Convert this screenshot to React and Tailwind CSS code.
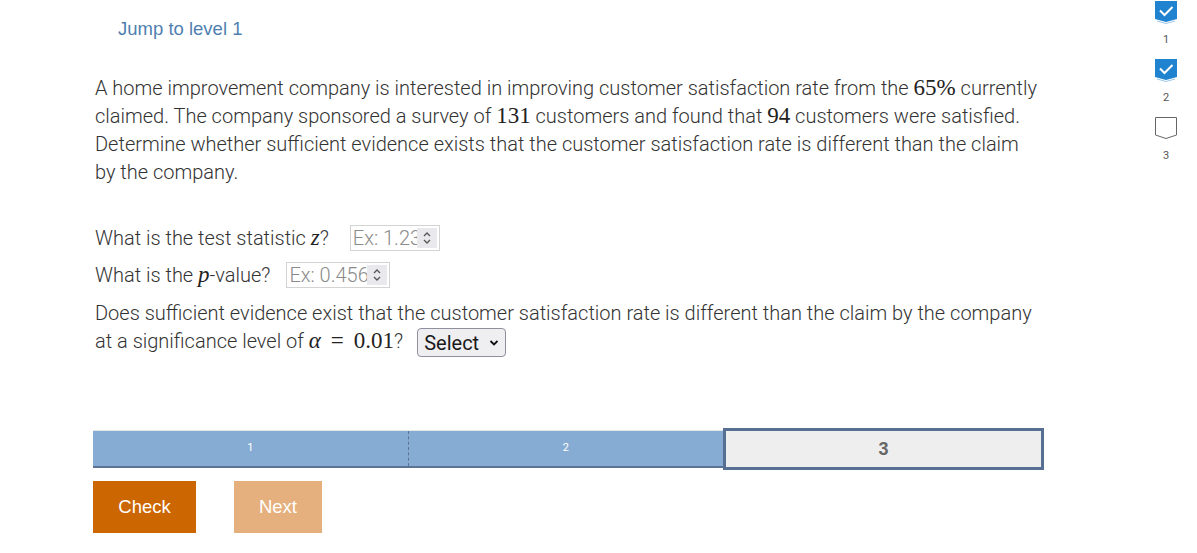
import React from 'react';

const M = ({ children, italic }) => (
  <span className={`font-['Liberation_Serif','DejaVu_Serif',serif] text-[23px] leading-none text-[#222] ${italic ? 'italic' : ''}`}>
    {children}
  </span>
);

const Spinner = () => (
  <span className="flex h-full w-[20px] items-center justify-center bg-[#e9e9ed]">
    <svg width="10" height="16" viewBox="0 0 10 16" fill="none" stroke="#555" strokeWidth="1.3">
      <path d="M2 6 L5 3 L8 6" />
      <path d="M2 10 L5 13 L8 10" />
    </svg>
  </span>
);

const NumInput = ({ placeholder, width, gap }) => (
  <span className={`${gap} inline-flex h-[26px] ${width} items-center overflow-hidden border border-[#d3d3d3] bg-white align-middle`}>
    <span className="flex-1 overflow-hidden whitespace-nowrap pl-[2px] text-[#8a8a8a]">{placeholder}</span>
    <span className="mr-[2px] h-[20px]"><Spinner /></span>
  </span>
);

const Badge = ({ done, label }) => (
  <div className="flex h-[58px] flex-col items-center">
    <svg width="24" height="24" viewBox="0 0 24 24">
      {done ? (
        <>
          <path d="M1 1 H23 V19 L12 22 L1 19 Z" fill="#1f83cf" />
          <path d="M3 21 L12 23.5 L21 21" stroke="#9cc6e8" strokeWidth="1" fill="none" />
          <path d="M6 10.5 L10.5 15 L18.5 7" stroke="#fff" strokeWidth="2" fill="none" />
        </>
      ) : (
        <path d="M1.5 1.5 H22.5 V19 L12 22.5 L1.5 19 Z" fill="#fff" stroke="#666" strokeWidth="1" />
      )}
    </svg>
    <span className="mt-[8px] font-['Roboto',sans-serif] text-[11px] font-normal text-[#555]">{label}</span>
  </div>
);

export default function App() {
  return (
    <div className="flex h-[553px] w-full bg-white font-['Roboto',sans-serif] text-[20px] font-light text-[#333]">
      <main className="flex-1 pl-[95px]">
        <div className="h-[41px] pl-[23px] pt-[15px] leading-[26px]">
          <a className="font-['Liberation_Sans',Arial,sans-serif] text-[18.5px] font-normal text-[#4f7fb0]">Jump to level 1</a>
        </div>

        <p className="mt-[33px] h-[112px] whitespace-nowrap leading-[28px]">
          A home improvement company is interested in improving customer satisfaction rate from the <M>65%</M> currently
          <br />
          claimed. The company sponsored a survey of <M>131</M> customers and found that <M>94</M> customers were satisfied.
          <br />
          Determine whether sufficient evidence exists that the customer satisfaction rate is different than the claim
          <br />
          by the company.
        </p>

        <div className="mt-[37px] flex h-[30px] items-center">
          <span>What is the test statistic <M italic>z</M>?</span>
          <NumInput placeholder="Ex: 1.234" width="w-[90px]" gap="ml-[21px]" />
        </div>
        <div className="mt-[7px] flex h-[30px] items-center">
          <span>What is the <M italic>p</M>-value?</span>
          <NumInput placeholder="Ex: 0.4567" width="w-[104px]" gap="ml-[16px]" />
        </div>
        <div className="mt-[9px] h-[56px] whitespace-nowrap leading-[28px]">
          Does sufficient evidence exist that the customer satisfaction rate is different than the claim by the company
          <br />
          at a significance level of <M italic>α</M>
          <span className="mx-[10px]"><M>=</M></span>
          <M>0.01</M>?
          <span className="ml-[14px] inline-flex h-[29px] w-[89px] items-center justify-between rounded-[4px] border border-[#8f8f9d] bg-[#efeff1] px-[6px] align-middle font-normal text-[#1a1a1a]">
            Select
            <svg width="10" height="8" viewBox="0 0 10 8" fill="none" stroke="#111" strokeWidth="1.8">
              <path d="M1.5 2 L5 5.5 L8.5 2" />
            </svg>
          </span>
        </div>

        <div className="-ml-[2px] mt-[73px] flex h-[42px] w-[951px] items-center">
          <div className="flex h-[38px] flex-1 border-t border-[#e6e6e6] border-b-2 border-b-[#5b7394] bg-[#87acd3] text-[11px] font-normal text-white">
            <div className="flex flex-1 items-center justify-center border-r border-dashed border-r-[#5b7394]">1</div>
            <div className="flex flex-1 items-center justify-center">2</div>
          </div>
          <div className="flex h-[42px] w-[321px] items-center justify-center border-[3px] border-[#566f92] bg-[#eeeeee] font-['Liberation_Sans',Arial,sans-serif] text-[18px] font-bold text-[#666]">
            3
          </div>
        </div>

        <div className="-ml-[2px] mt-[11px] flex gap-[38px] font-['Liberation_Sans',Arial,sans-serif] text-[18.5px] font-normal text-white">
          <button className="h-[52px] w-[103px] bg-[#cc6600]">Check</button>
          <button className="h-[52px] w-[88px] bg-[#e5b07d]">Next</button>
        </div>
      </main>

      <aside className="w-[43px]">
        <div className="flex w-[24px] flex-col">
          <Badge done label="1" />
          <Badge done label="2" />
          <Badge label="3" />
        </div>
      </aside>
    </div>
  );
}
